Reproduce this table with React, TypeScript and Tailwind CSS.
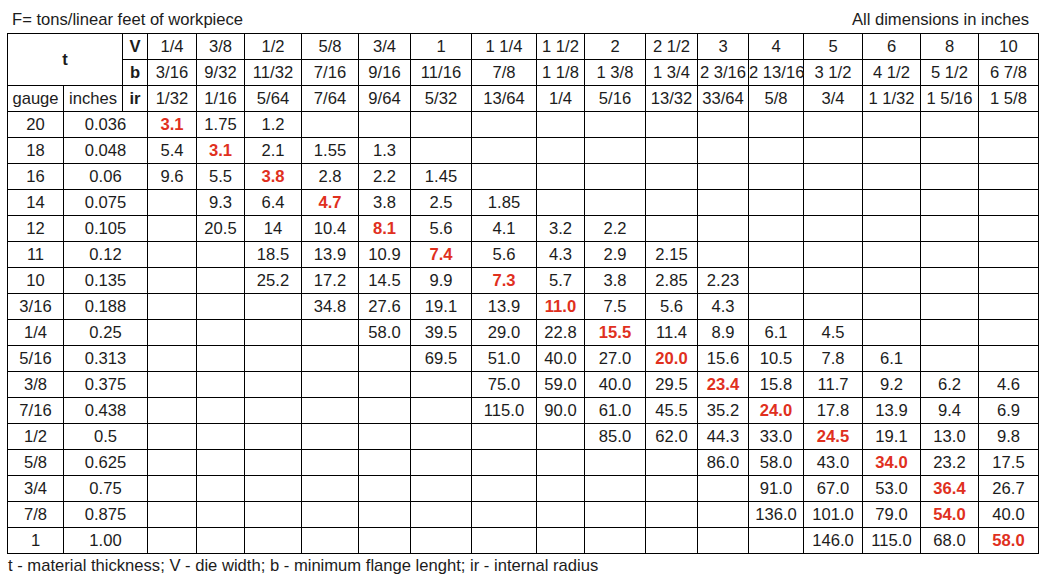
import React from "react";

const widths = [56, 59, 25, 49, 48, 57, 57, 52, 61, 65, 48, 61, 52, 51, 55, 59, 58, 58, 60];

const V = ["1/4", "3/8", "1/2", "5/8", "3/4", "1", "1 1/4", "1 1/2", "2", "2 1/2", "3", "4", "5", "6", "8", "10"];
const B = ["3/16", "9/32", "11/32", "7/16", "9/16", "11/16", "7/8", "1 1/8", "1 3/8", "1 3/4", "2 3/16", "2 13/16", "3 1/2", "4 1/2", "5 1/2", "6 7/8"];
const IR = ["1/32", "1/16", "5/64", "7/64", "9/64", "5/32", "13/64", "1/4", "5/16", "13/32", "33/64", "5/8", "3/4", "1 1/32", "1 5/16", "1 5/8"];

type Row = { g: string; inch: string; start: number; vals: string[]; red: number };

const rows: Row[] = [
  { g: "20", inch: "0.036", start: 0, vals: ["3.1", "1.75", "1.2"], red: 0 },
  { g: "18", inch: "0.048", start: 0, vals: ["5.4", "3.1", "2.1", "1.55", "1.3"], red: 1 },
  { g: "16", inch: "0.06", start: 0, vals: ["9.6", "5.5", "3.8", "2.8", "2.2", "1.45"], red: 2 },
  { g: "14", inch: "0.075", start: 1, vals: ["9.3", "6.4", "4.7", "3.8", "2.5", "1.85"], red: 2 },
  { g: "12", inch: "0.105", start: 1, vals: ["20.5", "14", "10.4", "8.1", "5.6", "4.1", "3.2", "2.2"], red: 3 },
  { g: "11", inch: "0.12", start: 2, vals: ["18.5", "13.9", "10.9", "7.4", "5.6", "4.3", "2.9", "2.15"], red: 3 },
  { g: "10", inch: "0.135", start: 2, vals: ["25.2", "17.2", "14.5", "9.9", "7.3", "5.7", "3.8", "2.85", "2.23"], red: 4 },
  { g: "3/16", inch: "0.188", start: 3, vals: ["34.8", "27.6", "19.1", "13.9", "11.0", "7.5", "5.6", "4.3"], red: 4 },
  { g: "1/4", inch: "0.25", start: 4, vals: ["58.0", "39.5", "29.0", "22.8", "15.5", "11.4", "8.9", "6.1", "4.5"], red: 4 },
  { g: "5/16", inch: "0.313", start: 5, vals: ["69.5", "51.0", "40.0", "27.0", "20.0", "15.6", "10.5", "7.8", "6.1"], red: 4 },
  { g: "3/8", inch: "0.375", start: 6, vals: ["75.0", "59.0", "40.0", "29.5", "23.4", "15.8", "11.7", "9.2", "6.2", "4.6"], red: 4 },
  { g: "7/16", inch: "0.438", start: 6, vals: ["115.0", "90.0", "61.0", "45.5", "35.2", "24.0", "17.8", "13.9", "9.4", "6.9"], red: 5 },
  { g: "1/2", inch: "0.5", start: 8, vals: ["85.0", "62.0", "44.3", "33.0", "24.5", "19.1", "13.0", "9.8"], red: 4 },
  { g: "5/8", inch: "0.625", start: 10, vals: ["86.0", "58.0", "43.0", "34.0", "23.2", "17.5"], red: 3 },
  { g: "3/4", inch: "0.75", start: 11, vals: ["91.0", "67.0", "53.0", "36.4", "26.7"], red: 3 },
  { g: "7/8", inch: "0.875", start: 11, vals: ["136.0", "101.0", "79.0", "54.0", "40.0"], red: 3 },
  { g: "1", inch: "1.00", start: 12, vals: ["146.0", "115.0", "68.0", "58.0"], red: 3 },
];

const cell = "border border-black p-0 text-center align-middle whitespace-nowrap";

export default function App() {
  return (
    <div
      className="w-[1051px] h-[584px] bg-white text-[#1c1c1c] text-[16.6px] leading-[18px]"
      style={{ fontFamily: '"Liberation Sans", Arial, sans-serif' }}
    >
      <div className="ml-[7px] w-[1031px]">
        <div className="flex justify-between items-center h-[33px] pt-[6px] pl-[5px] pr-[9px]">
          <span>F= tons/linear feet of workpiece</span>
          <span>All dimensions in inches</span>
        </div>
        <table className="table-fixed border-collapse w-[1031px]">
          <colgroup>
            {widths.map((w, i) => (
              <col key={i} style={{ width: w }} />
            ))}
          </colgroup>
          <tbody>
            <tr className="h-[26px]">
              <td className={`${cell} font-bold`} colSpan={2} rowSpan={2}>
                t
              </td>
              <td className={`${cell} font-bold`}>V</td>
              {V.map((v, i) => (
                <td key={i} className={cell}>
                  {v}
                </td>
              ))}
            </tr>
            <tr className="h-[26px]">
              <td className={`${cell} font-bold`}>b</td>
              {B.map((v, i) => (
                <td key={i} className={cell}>
                  {v}
                </td>
              ))}
            </tr>
            <tr className="h-[26px]">
              <td className={cell}>gauge</td>
              <td className={cell}>inches</td>
              <td className={`${cell} font-bold`}>ir</td>
              {IR.map((v, i) => (
                <td key={i} className={cell}>
                  {v}
                </td>
              ))}
            </tr>
            {rows.map((r, ri) => (
              <tr key={ri} className="h-[26px]">
                <td className={cell}>{r.g}</td>
                <td className={cell} colSpan={2}>
                  {r.inch}
                </td>
                {Array.from({ length: 16 }).map((_, ci) => {
                  const idx = ci - r.start;
                  const v = idx >= 0 && idx < r.vals.length ? r.vals[idx] : "";
                  const isRed = idx === r.red;
                  return (
                    <td key={ci} className={isRed ? `${cell} font-bold text-[#e0301e]` : cell}>
                      {v}
                    </td>
                  );
                })}
              </tr>
            ))}
          </tbody>
        </table>
        <div className="pl-[1px] pt-[3px]">
          t - material thickness; V - die width; b - minimum flange lenght; ir - internal radius
        </div>
      </div>
    </div>
  );
}
